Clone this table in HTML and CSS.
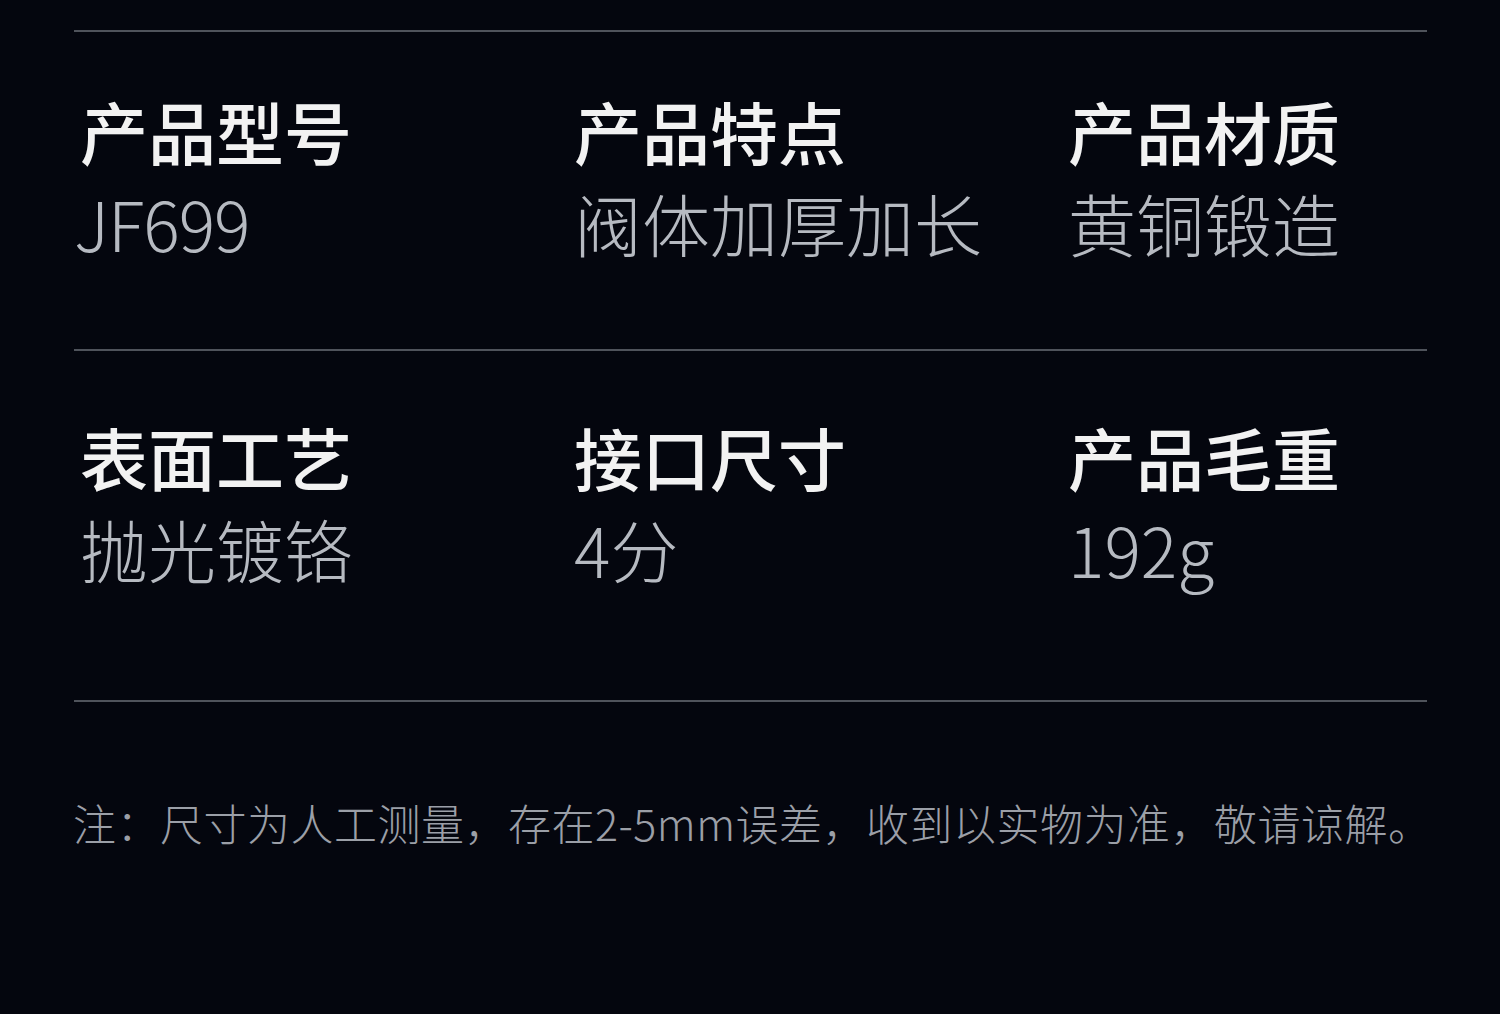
FILE: index.html
```html
<!DOCTYPE html>
<html lang="zh-CN">
<head>
<meta charset="utf-8">
<title>产品参数</title>
<link rel="stylesheet" href="styles.css">
</head>
<body>
<div class="sheet">
  <div class="rule rule-top"></div>
  <div class="specs specs-first">
    <div class="spec">
      <div class="spec-label">产品型号</div>
      <div class="spec-value spec-value-latin">JF699</div>
    </div>
    <div class="spec">
      <div class="spec-label">产品特点</div>
      <div class="spec-value">阀体加厚加长</div>
    </div>
    <div class="spec">
      <div class="spec-label">产品材质</div>
      <div class="spec-value">黄铜锻造</div>
    </div>
  </div>
  <div class="rule"></div>
  <div class="specs specs-second">
    <div class="spec">
      <div class="spec-label">表面工艺</div>
      <div class="spec-value">抛光镀铬</div>
    </div>
    <div class="spec">
      <div class="spec-label">接口尺寸</div>
      <div class="spec-value">4分</div>
    </div>
    <div class="spec">
      <div class="spec-label">产品毛重</div>
      <div class="spec-value">192g</div>
    </div>
  </div>
  <div class="rule"></div>
  <p class="note">注：尺寸为人工测量，存在2-5mm误差，收到以实物为准，敬请谅解。</p>
</div>
</body>
</html>
```

FILE: styles.css
```css
html, body {
  margin: 0;
  padding: 0;
  background: #04060e;
}

body {
  width: 1500px;
  height: 1014px;
  overflow: hidden;
  font-family: "Noto Sans CJK SC", "Noto Sans", sans-serif;
}

.sheet {
  margin-left: 74px;
  width: 1353px;
}

.rule {
  height: 2px;
  background: #4f535b;
}

.rule-top {
  margin-top: 30px;
}

.specs {
  display: grid;
  grid-template-columns: 494px 494px 1fr;
  padding-left: 6px;
}

.specs-first {
  padding-top: 53px;
  padding-bottom: 80px;
}

.specs-second {
  padding-top: 60px;
  padding-bottom: 105px;
}

.spec {
  display: flex;
  flex-direction: column;
}

.spec-label {
  font-size: 68px;
  line-height: 92px;
  font-weight: 500;
  color: #f2f2f2;
  white-space: nowrap;
}

.spec-value {
  font-size: 68px;
  line-height: 92px;
  font-weight: 300;
  color: #b6bac1;
  white-space: nowrap;
}

.spec-value-latin {
  margin-left: -6px;
  letter-spacing: -1px;
}

.note {
  margin: 0 0 0 -1px;
  padding-top: 90px;
  font-size: 43px;
  line-height: 60px;
  font-weight: 300;
  letter-spacing: 0.5px;
  color: #9b9fa7;
  white-space: nowrap;
}
```
